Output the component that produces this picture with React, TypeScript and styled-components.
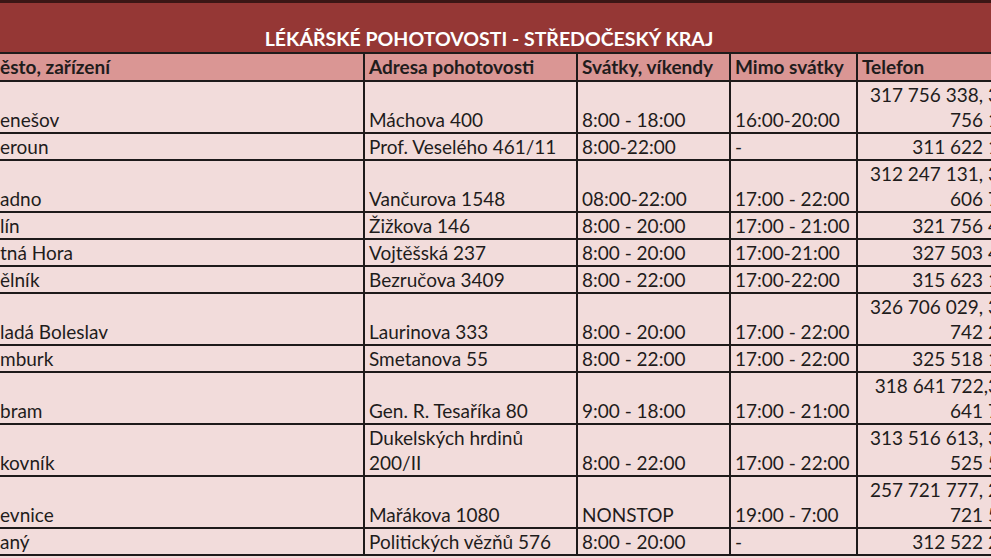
import React from "react";
import styled, { createGlobalStyle } from "styled-components";

const Global = createGlobalStyle`
  html, body { margin: 0; padding: 0; background: #ffffff; }
  body { font-family: "Lato", "Liberation Sans", sans-serif; }
`;

const Page = styled.div`
  width: 991px;
  height: 558px;
  overflow: hidden;
  background: #f2dcdb;
`;

const Sheet = styled.div`
  width: 1000px;
`;

const TopStrip = styled.div`
  height: 3px;
  background: #3b1615;
`;

const TitleBar = styled.div`
  height: 49px;
  background: #953735;
  display: flex;
  align-items: flex-end;
  justify-content: center;
  padding-right: 22px;
  box-sizing: border-box;
  color: #ffffff;
  font-weight: 700;
  font-size: 19.5px;
  line-height: 26px;
`;

const Table = styled.table`
  border-collapse: collapse;
  table-layout: fixed;
  width: 1000px;
  font-size: 19px;
  color: #1f1c1c;
`;

const HeadCell = styled.th<{ $first?: boolean }>`
  background: #da9694;
  border: 2px solid #1e1a1a;
  border-left: ${(p) => (p.$first ? "none" : "2px solid #1e1a1a")};
  font-weight: 700;
  text-align: left;
  padding: 0 0 0 ${(p) => (p.$first ? "0" : "4px")};
  height: 26px;
  line-height: 26px;
  vertical-align: bottom;
  white-space: nowrap;
  overflow: hidden;
`;

const Cell = styled.td<{ $first?: boolean; $right?: boolean }>`
  background: #f2dcdb;
  border: 2px solid #1e1a1a;
  border-left: ${(p) => (p.$first ? "none" : "2px solid #1e1a1a")};
  padding: 0 0 0 ${(p) => (p.$first ? "0" : "4px")};
  line-height: 25px;
  vertical-align: bottom;
  text-align: ${(p) => (p.$right ? "right" : "left")};
  white-space: nowrap;
  overflow: hidden;
`;

const Line = styled.div`
  white-space: nowrap;
`;

type Row = {
  city: string;
  addr: string[];
  we: string;
  wd: string;
  tel: string[];
};

const rows: Row[] = [
  { city: "enešov", addr: ["Máchova 400"], we: "8:00 - 18:00", wd: "16:00-20:00", tel: ["317 756 338, 3", "756 1"] },
  { city: "eroun", addr: ["Prof. Veselého 461/11"], we: "8:00-22:00", wd: "-", tel: ["311 622 1"] },
  { city: "adno", addr: ["Vančurova 1548"], we: "08:00-22:00", wd: "17:00 - 22:00", tel: ["312 247 131, 3", "606 7"] },
  { city: "lín", addr: ["Žižkova 146"], we: "8:00 - 20:00", wd: "17:00 - 21:00", tel: ["321 756 4"] },
  { city: "tná Hora", addr: ["Vojtěšská 237"], we: "8:00 - 20:00", wd: "17:00-21:00", tel: ["327 503 4"] },
  { city: "ělník", addr: ["Bezručova 3409"], we: "8:00 - 22:00", wd: "17:00-22:00", tel: ["315 623 1"] },
  { city: "ladá Boleslav", addr: ["Laurinova 333"], we: "8:00 - 20:00", wd: "17:00 - 22:00", tel: ["326 706 029, 3", "742 2"] },
  { city: "mburk", addr: ["Smetanova 55"], we: "8:00 - 22:00", wd: "17:00 - 22:00", tel: ["325 518 1"] },
  { city: "bram", addr: ["Gen. R. Tesaříka 80"], we: "9:00 - 18:00", wd: "17:00 - 21:00", tel: ["318 641 722,3", "641 7"] },
  { city: "kovník", addr: ["Dukelských hrdinů", "200/II"], we: "8:00 - 22:00", wd: "17:00 - 22:00", tel: ["313 516 613, 3", "525 5"] },
  { city: "evnice", addr: ["Mařákova 1080"], we: "NONSTOP", wd: "19:00 - 7:00", tel: ["257 721 777, 2", "721 5"] },
  { city: "aný", addr: ["Politických vězňů 576"], we: "8:00 - 20:00", wd: "-", tel: ["312 522 2"] },
];

export default function App() {
  return (
    <Page>
      <Global />
      <Sheet>
        <TopStrip />
        <TitleBar>LÉKÁŘSKÉ POHOTOVOSTI - STŘEDOČESKÝ KRAJ</TitleBar>
        <Table>
          <colgroup>
            <col style={{ width: 364 }} />
            <col style={{ width: 213 }} />
            <col style={{ width: 153 }} />
            <col style={{ width: 127 }} />
            <col style={{ width: 143 }} />
          </colgroup>
          <thead>
            <tr>
              <HeadCell $first>ěsto, zařízení</HeadCell>
              <HeadCell>Adresa pohotovosti</HeadCell>
              <HeadCell>Svátky, víkendy</HeadCell>
              <HeadCell>Mimo svátky</HeadCell>
              <HeadCell>Telefon</HeadCell>
            </tr>
          </thead>
          <tbody>
            {rows.map((r) => (
              <tr key={r.city}>
                <Cell $first>{r.city}</Cell>
                <Cell>
                  {r.addr.map((a) => (
                    <Line key={a}>{a}</Line>
                  ))}
                </Cell>
                <Cell>{r.we}</Cell>
                <Cell>{r.wd}</Cell>
                <Cell $right>
                  {r.tel.map((t) => (
                    <Line key={t}>{t}</Line>
                  ))}
                </Cell>
              </tr>
            ))}
          </tbody>
        </Table>
      </Sheet>
    </Page>
  );
}
